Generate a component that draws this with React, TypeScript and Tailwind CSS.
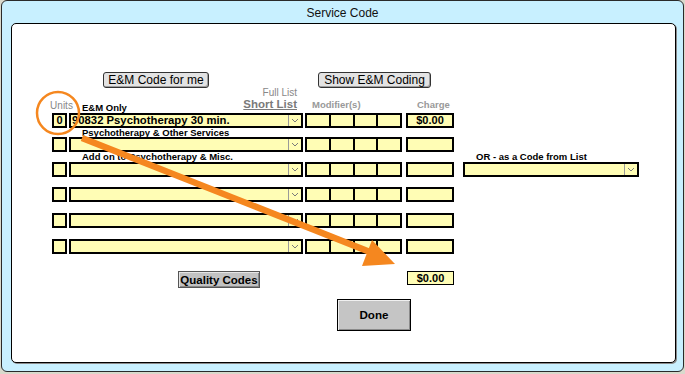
import React from 'react'

type Row = {
  gap: string
  label?: string
  orLabel?: string
  units?: string
  value?: string
  charge?: string
  orSelect?: boolean
}

const ROWS: Row[] = [
  { gap: 'h-0', units: '0', value: '90832 Psychotherapy 30 min.', charge: '$0.00' },
  { gap: 'h-[9px]', label: 'Psychotherapy & Other Services' },
  { gap: 'h-[10px]', label: 'Add on to Psychotherapy & Misc.', orLabel: 'OR - as a Code from List', orSelect: true },
  { gap: 'h-[10px]' },
  { gap: 'h-[11px]' },
  { gap: 'h-[11px]' },
]

function Chevron() {
  return (
    <svg width="8" height="5" viewBox="0 0 8 5">
      <polyline points="1,1 4,4 7,1" fill="none" stroke="#7a7a7a" strokeWidth="1" />
    </svg>
  )
}

function Select({ wide, value }: { wide: boolean; value?: string }) {
  return (
    <div className={`flex h-[15px] border-2 border-black bg-[#fffdb5] ${wide ? 'w-[234px]' : 'w-[176px]'}`}>
      <div className="flex-1 overflow-hidden whitespace-nowrap pl-[1px] text-[11.3px] font-bold leading-[11px] text-black">
        {value}
      </div>
      <div className="flex w-[13px] items-center justify-center border-l border-[#9a9a9a]">
        <Chevron />
      </div>
    </div>
  )
}

function Modifiers() {
  return (
    <div className="flex h-[15px] w-[97px] border-2 border-black bg-[#fffdb5]">
      <div className="flex-1" />
      <div className="flex-1 border-l-2 border-black" />
      <div className="flex-1 border-l-2 border-black" />
      <div className="flex-1 border-l-2 border-black" />
    </div>
  )
}

function Box({ w, text }: { w: string; text?: string }) {
  return (
    <div className={`flex h-[15px] items-center justify-center border-2 border-black bg-[#fffdb5] text-[11px] font-bold leading-[11px] text-black ${w}`}>
      {text}
    </div>
  )
}

export default function App() {
  return (
    <div className="relative h-[374px] w-[685px] overflow-hidden bg-[#d9d9cc] font-['Liberation_Sans',Arial,sans-serif]">
      <div className="ml-[1px] h-[372px] w-[683px] rounded-[6px] border border-[#2a2a2a] bg-[#c8f0ff]">
        {/* title */}
        <div className="flex h-[22px] items-center justify-center pt-[2px] text-[12px] text-[#111]">Service Code</div>

        {/* panel */}
        <div className="ml-[9px] h-[340px] w-[665px] rounded-[5px] border border-black bg-white shadow-[1px_1px_0_#8a8a8a]">
          <div className="pl-[40px] pt-[48px]">
            {/* buttons */}
            <div className="flex h-[16px]">
              <div className="ml-[51px] flex w-[106px] items-center justify-center rounded-[3px] border border-[#333] bg-[#e3e3e3] text-[12px] leading-[12px] text-black shadow-[inset_-1px_-1px_0_#a0a0a0]">
                E&amp;M Code for me
              </div>
              <div className="ml-[109px] flex w-[113px] items-center justify-center rounded-[3px] border border-[#333] bg-[#e3e3e3] text-[12px] leading-[12px] text-black shadow-[inset_-1px_-1px_0_#a0a0a0]">
                Show E&amp;M Coding
              </div>
            </div>

            {/* headers */}
            <div className="flex h-[25px] items-end">
              <div className="flex w-[15px] justify-center whitespace-nowrap pb-[1px] text-[10px] leading-[12px] text-[#888]">
                <span className="ml-[4px]">Units</span>
              </div>
              <div className="ml-[2px] flex w-[234px] items-end justify-between pl-[13px] pr-[6px]">
                <span className="text-[9.5px] font-bold leading-[10px] text-black">E&amp;M Only</span>
                <div className="flex flex-col items-end pb-[3px]">
                  <span className="text-[10px] leading-[10px] text-[#888]">Full List</span>
                  <span className="text-[11.5px] font-bold leading-[12px] text-[#7a7a7a] underline">Short List</span>
                </div>
              </div>
              <div className="ml-[2px] w-[97px] pb-[3px] pl-[7px] text-[9.5px] font-bold leading-[10px] text-[#999]">Modifier(s)</div>
              <div className="ml-[4px] w-[48px] pb-[3px] pl-[11px] text-[9.5px] font-bold leading-[10px] text-[#999]">Charge</div>
            </div>

            {/* rows */}
            {ROWS.map((row, i) => (
              <div key={i}>
                <div className={`flex items-center whitespace-nowrap text-[9.5px] font-bold leading-[8px] text-black ${row.gap}`}>
                  {row.label && <span className="ml-[30px] w-[394px]">{row.label}</span>}
                  {row.orLabel && <span>{row.orLabel}</span>}
                </div>
                <div className="flex">
                  <Box w="w-[15px]" text={row.units} />
                  <div className="ml-[2px]">
                    <Select wide value={row.value} />
                  </div>
                  <div className="ml-[2px]">
                    <Modifiers />
                  </div>
                  <div className="ml-[4px]">
                    <Box w="w-[48px]" text={row.charge} />
                  </div>
                  {row.orSelect && (
                    <div className="ml-[9px]">
                      <Select wide={false} />
                    </div>
                  )}
                </div>
              </div>
            ))}

            {/* totals */}
            <div className="mt-[17px] flex items-start">
              <div className="ml-[126px] flex h-[17px] w-[82px] items-center justify-center border border-[#555] bg-[#c2c2c2] text-[11.5px] font-bold leading-[12px] text-black shadow-[inset_1px_1px_0_#e6e6e6,inset_-1px_-1px_0_#888]">
                Quality Codes
              </div>
              <div className="ml-[147px] flex h-[14px] w-[47px] items-center justify-center border border-black bg-[#fffdb5] text-[11px] font-bold leading-[11px] text-black">
                $0.00
              </div>
            </div>

            <div className="mt-[11px] flex">
              <div className="ml-[285px] flex h-[32px] w-[74px] items-center justify-center border border-black bg-[#c5c5c5] text-[11.6px] font-bold text-black shadow-[inset_1px_1px_0_#f0f0f0,inset_-1px_-1px_0_#8a8a8a]">
                Done
              </div>
            </div>
          </div>
        </div>
      </div>

      {/* annotation overlay */}
      <svg className="pointer-events-none absolute left-0 top-0" width="685" height="374" viewBox="0 0 685 374">
        <circle cx="58" cy="113" r="21" fill="none" stroke="#f5871f" strokeWidth="2.5" />
        <line x1="82" y1="138" x2="370" y2="252" stroke="#f5871f" strokeWidth="6.5" />
        <polygon points="395,264 372,240 362,266" fill="#f5871f" />
      </svg>
    </div>
  )
}
